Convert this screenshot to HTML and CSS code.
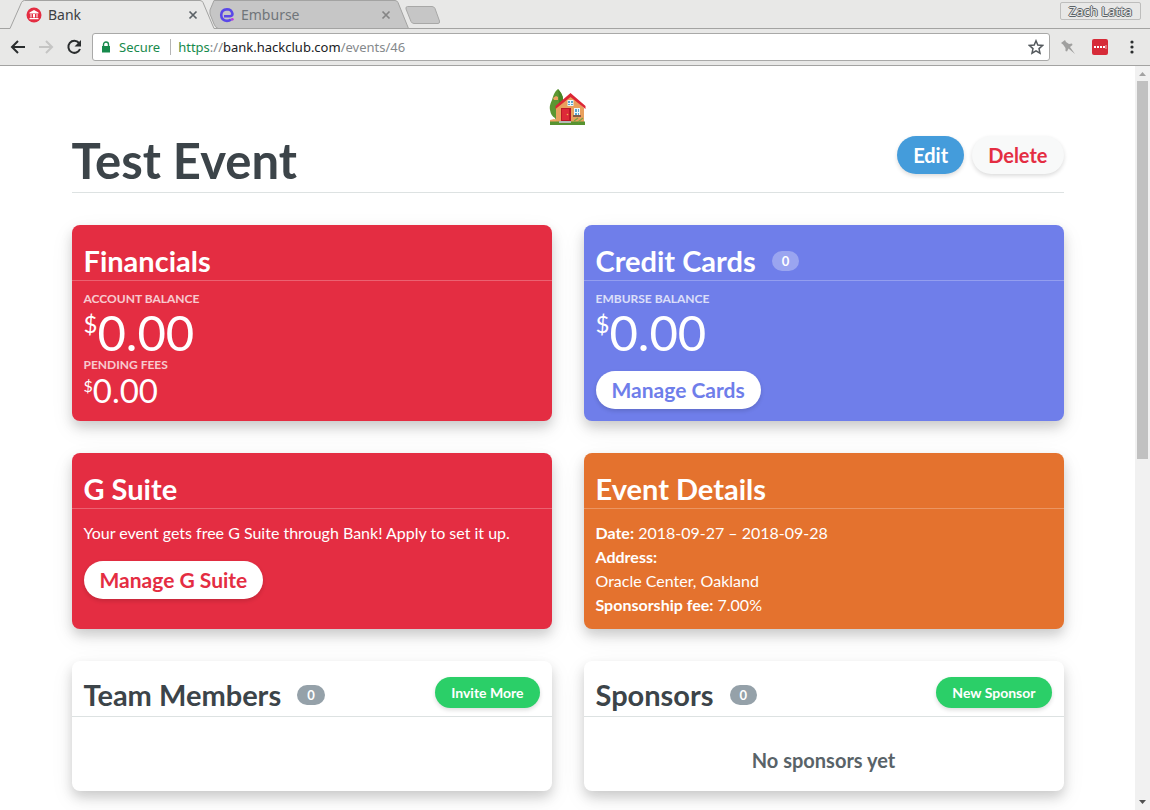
FILE: index.html
```html
<!DOCTYPE html>
<html lang="en">
<head>
<meta charset="utf-8">
<title>Bank</title>
<link rel="stylesheet" href="styles.css">
</head>
<body>
<div class="browser">
  <header class="tabstrip">
    <div class="tab tab-active">
      <svg class="tab-shape" viewBox="0 0 208 29" preserveAspectRatio="none" aria-hidden="true"><path d="M0 28.5H2L13.500 2.500Q14.500 .5 16.500 .5H192Q194 .5 195 2.500L206 28.500H208V29H0Z" fill="#e8e8e7"/><path d="M0 28.500H2L13.500 2.500Q14.500 .5 16.500 .5H192Q194 .5 195 2.500L206 28.500H208" fill="none" stroke="#a3a3a2"/></svg>
      <svg class="favicon" viewBox="0 0 16 16" aria-hidden="true"><circle cx="8" cy="8" r="7.500" fill="#e42d42"/><path d="M8 3l4.500 2.500v1h-9v-1zM4.500 7h1v3.500h-1zM7 7h2v3.500H7zM10.500 7h1v3.500h-1zM3.500 11h9v1.200h-9z" fill="#fff"/></svg>
      <span class="tab-title">Bank</span>
      <button class="tab-close" aria-label="Close Bank"><svg viewBox="0 0 10 10"><path d="M1.500 1.500l7 7M8.500 1.500l-7 7" stroke="#5b6166" stroke-width="1.700"/></svg></button>
    </div>
    <div class="tab tab-back">
      <svg class="tab-shape" viewBox="0 0 208 29" preserveAspectRatio="none" aria-hidden="true"><path d="M2 10L6 .5H187Q189 .5 190 2.500L200.500 28.500H10Q7 27 6 24L2 14Z" fill="#c6c6c6" stroke="#a3a3a2"/></svg>
      <svg class="favicon" viewBox="0 0 16 16" aria-hidden="true"><path d="M5 9.300H11Q13.800 9 13.400 6.500Q12.300 2.200 8 2.200Q2.300 2.600 2.200 8Q2.400 13.600 8 13.900Q10.500 13.900 12 12.600" fill="none" stroke="#5a48e8" stroke-width="2.600"/><circle cx="13.300" cy="12.300" r="1.400" fill="#b93ce0"/></svg>
      <span class="tab-title">Emburse</span>
      <button class="tab-close" aria-label="Close Emburse"><svg viewBox="0 0 10 10"><path d="M1.500 1.500l7 7M8.500 1.500l-7 7" stroke="#858585" stroke-width="1.700"/></svg></button>
    </div>
    <button class="new-tab" aria-label="New tab"><svg viewBox="0 0 36 19"><path d="M2.500 .5H27Q29 .5 30 2.500L34.500 15Q35 17.500 33 17.500H9Q7 17.500 6 15.500L1 3Q.5 .5 2.500 .5Z" fill="#c6c6c6" stroke="#a8a8a7"/></svg></button>
    <button class="profile">Zach Latta</button>
  </header>
  <nav class="toolbar" aria-label="Browser toolbar">
    <button class="nav-button" aria-label="Back"><svg viewBox="0 0 16 16"><path d="M15 8H2.500M8 2L2 8l6 6" fill="none" stroke="#2a2d2e" stroke-width="2"/></svg></button>
    <button class="nav-button" aria-label="Forward"><svg viewBox="0 0 16 16"><path d="M1 8h12.500M8 2l6 6-6 6" fill="none" stroke="#c5c5c4" stroke-width="2"/></svg></button>
    <button class="nav-button" aria-label="Reload"><svg viewBox="0 0 16 16"><path d="M13 4A6 6 0 1 0 14 10" fill="none" stroke="#2a2d2e" stroke-width="2"/><path d="M15 1v6.500H8.500z" fill="#2a2d2e"/></svg></button>
    <div class="address">
      <svg class="lock" viewBox="0 0 10 12" aria-hidden="true"><path d="M2.500 5V3.500a2.500 2.500 0 0 1 5 0V5" fill="none" stroke="#178a4c" stroke-width="1.400"/><path d="M1 5h8v6.500H1z" fill="#178a4c"/></svg>
      <span class="secure">Secure</span>
      <div class="url" role="textbox" aria-label="Address" contenteditable="true" spellcheck="false"><span class="scheme">https</span><span class="muted">://</span>bank.hackclub.com<span class="muted">/events/46</span></div>
      <button class="star" aria-label="Bookmark"><svg viewBox="0 0 16 16"><path d="M8 1.800l1.800 4.300 4.700.4-3.500 3.100 1 4.600L8 11.800 4 14.200l1-4.600L1.500 6.500l4.700-.4z" fill="none" stroke="#54595d" stroke-width="1.500"/></svg></button>
    </div>
    <button class="tool" aria-label="Pin"><svg viewBox="0 0 16 16"><path d="M1 4l4-3 1 2 3 2 3-.5.500 1.500-2.500 2L15 15 8.500 9.500 7 12.500l-1.500-.5V9L3 5.500z" fill="#a0a09f"/></svg></button>
    <button class="tool" aria-label="Extension"><svg viewBox="0 0 16 16"><rect width="16" height="16" rx="2" fill="#d62b38"/><path d="M2 7h2v2H2zM5 7h2v2H5zM8 7h2v2H8zM11 7h2v2h-2z" fill="#fff"/><path d="M13.500 6h1v4h-1z" fill="#f3a9ae"/></svg></button>
    <button class="tool" aria-label="Menu"><svg viewBox="0 0 16 16"><g fill="#2a2d2e"><circle cx="8" cy="3" r="1.600"/><circle cx="8" cy="8" r="1.600"/><circle cx="8" cy="13" r="1.600"/></g></svg></button>
  </nav>
  <div class="viewport">
    <main class="page">
      <div class="content">
        <a class="home" href="#" aria-label="Home"><svg viewBox="0 0 37 37">
          <path d="M9 0C5 3 4 8 3 11Q0 17 1 21Q2 27 6 29L8 35H14V8Q12 3 9 0Z" fill="#5c9631"/>
          <path d="M9 0Q13 4 14 10L14 20 9 27Q11 10 9 0Z" fill="#488526"/>
          <path d="M4 9l3-2 2 1v3H5zM1 31l4-1 3 1v3H1z" fill="#efa263"/>
          <path d="M7 19L21.500 6 35 19V34H7Z" fill="#e9a05d"/>
          <path d="M21.500 4L36.500 17V20L21.500 8 6.500 20V17Z" fill="#dc2634"/>
          <path d="M18.500 11h6v6h-6z" fill="#eef7fb"/><path d="M19 12h2v2h-2zM22 12h2v2h-2zM19 15h2v1h-2zM22 15h2v1h-2z" fill="#5ca6cf"/>
          <path d="M12 19h10v13H12z" fill="#bb1727"/><path d="M13 20h7v11h-7z" fill="#dd2938"/><circle cx="18.500" cy="25.500" r=".8" fill="#f2b44c"/>
          <path d="M25 19h6v8h-6z" fill="#eef7fb"/><path d="M26 20h2v3h-2zM29 20h1v3h-1zM26 24h2v2h-2zM29 24h1v2h-1z" fill="#5ca6cf"/>
          <path d="M24 26h8v2h-8z" fill="#855b47"/>
          <path d="M1 32.500h35V36H1z" fill="#579330"/><path d="M10 32h12v2H10z" fill="#b5bbb7"/><path d="M25 32l4-3M29 33l5-4" stroke="#7da542" stroke-width="1.300"/>
        </svg></a>
        <div class="page-head">
          <h1>Test Event</h1>
          <div class="actions">
            <a class="btn btn-info" href="#">Edit</a>
            <button class="btn btn-delete">Delete</button>
          </div>
        </div>
        <div class="cards">
          <section class="card card-red">
            <div class="card-head"><h2>Financials</h2></div>
            <dl class="stats">
              <dt>Account balance</dt>
              <dd class="amount"><span class="currency">$</span>0.00</dd>
              <dt>Pending fees</dt>
              <dd class="amount amount-small"><span class="currency">$</span>0.00</dd>
            </dl>
          </section>
          <section class="card card-indigo">
            <div class="card-head"><h2>Credit Cards</h2><span class="badge">0</span></div>
            <dl class="stats">
              <dt>Emburse balance</dt>
              <dd class="amount"><span class="currency">$</span>0.00</dd>
            </dl>
            <a class="btn btn-card" href="#">Manage Cards</a>
          </section>
          <section class="card card-red">
            <div class="card-head"><h2>G Suite</h2></div>
            <p class="copy">Your event gets free G Suite through Bank! Apply to set it up.</p>
            <a class="btn btn-card" href="#">Manage G Suite</a>
          </section>
          <section class="card card-orange">
            <div class="card-head"><h2>Event Details</h2></div>
            <p class="copy"><strong>Date:</strong> 2018-09-27 – 2018-09-28<br><strong>Address:</strong><br>Oracle Center, Oakland<br><strong>Sponsorship fee:</strong> 7.00%</p>
          </section>
          <section class="card">
            <div class="card-head card-head-action"><h2>Team Members</h2><span class="badge">0</span><a class="btn btn-small" href="#">Invite More</a></div>
          </section>
          <section class="card">
            <div class="card-head card-head-action"><h2>Sponsors</h2><span class="badge">0</span><a class="btn btn-small" href="#">New Sponsor</a></div>
            <p class="empty">No sponsors yet</p>
          </section>
        </div>
      </div>
    </main>
    <div class="scrollbar" aria-hidden="true">
      <svg viewBox="0 0 15 15"><path d="M4 10h7L7.500 6z" fill="#a3a3a3"/></svg>
      <div class="track"><div class="thumb"></div></div>
      <svg viewBox="0 0 15 15"><path d="M4 5h7L7.500 9z" fill="#505050"/></svg>
    </div>
  </div>
</div>
</body>
</html>
```
FILE: styles.css
```css
* { box-sizing: border-box; }
body, h1, h2, p, dl, dd { margin: 0; }
button { margin: 0; padding: 0; border: 0; background: none; font: inherit; color: inherit; }
a { color: inherit; text-decoration: none; }
svg { display: block; }

body {
  background: #fff;
  color: #3c4449;
  font-family: Lato, "Liberation Sans", sans-serif;
  font-size: 16px;
  line-height: 24px;
}

.browser { display: flex; flex-direction: column; height: 100vh; overflow: hidden; }

/* Tabs */
.tabstrip {
  display: flex;
  flex: none;
  height: 29px;
  padding: 0 8px;
  background: #e8e8e7;
  box-shadow: inset 0 -1px #a3a3a2;
  font: 14px/28px "Noto Sans", sans-serif;
}
.tab {
  position: relative;
  display: flex;
  align-items: center;
  width: 208px;
  padding: 0 18px;
}
.tab-active { z-index: 1; color: #3c4043; }
.tab-back { margin-left: -8px; padding: 0 18px 0 11px; color: #70757a; }
.tab-back .tab-close { margin-right: 7px; }
.tab-shape { position: absolute; inset: 0; width: 100%; height: 100%; }
.favicon, .tab-title, .tab-close { position: relative; }
.favicon { width: 16px; height: 16px; }
.tab-title { flex: 1; margin-left: 6px; }
.tab-close svg { width: 10px; height: 10px; }
.new-tab { align-self: center; margin: 2px 0 0 -11px; }
.new-tab svg { width: 36px; height: 19px; }
.profile {
  height: 18px;
  margin: 2px 1px 0 auto;
  padding: 0 8px;
  border: 1px solid #bdbdbc;
  border-radius: 2px;
  color: #e8e8e7;
  font-size: 13px;
  line-height: 16px;
  text-shadow: 1px 0 #5d6468, -1px 0 #5d6468, 0 1px #5d6468, 0 -1px #5d6468;
}

/* Toolbar */
.toolbar {
  display: flex;
  flex: none;
  align-items: center;
  gap: 12px;
  height: 37px;
  padding: 0 10px;
  border-bottom: 1px solid #a3a3a2;
  background: #e8e8e7;
  font: 13px/24px "Noto Sans", sans-serif;
}
.nav-button svg, .star svg { width: 16px; height: 16px; }
.tool svg { width: 16px; height: 16px; }
.tool { margin: 0 0 0 4px; }
.address {
  display: flex;
  flex: 1;
  align-items: center;
  height: 28px;
  margin-right: -6px;
  margin-left: -2px;
  padding: 0 5px 0 8px;
  border: 1px solid #a9a9a8;
  border-radius: 3px;
  background: #fff;
}
.lock { width: 10px; height: 12px; }
.secure { margin: 0 10px 0 8px; color: #178a4c; }
.url {
  flex: 1;
  padding-left: 7px;
  border-left: 1px solid #b5b5b5;
  color: #202124;
  line-height: 16px;
  outline: 0;
}
.scheme { color: #178a4c; }
.muted { color: #85898c; }

/* Page */
.viewport { display: flex; flex: 1; min-height: 0; }
.page { flex: 1; min-width: 0; overflow: hidden; padding: 0 32px; }
.content { max-width: 992px; margin: 0 auto; padding-top: 23px; }
.home { display: block; width: 37px; margin: 0 auto; }
.home svg { width: 37px; height: 37px; }
.page-head {
  display: flex;
  align-items: center;
  justify-content: space-between;
  padding-top: 2px;
  border-bottom: 1px solid #dde2e2;
}
h1 { font-size: 49px; line-height: 64px; }
.actions { display: flex; gap: 8px; margin-bottom: 10px; }

.btn {
  display: inline-block;
  padding: 7px 16px;
  border-radius: 19px;
  box-shadow: 0 2px 4px rgba(0, 0, 0, .14);
  font-size: 21px;
  font-weight: 700;
  line-height: 24px;
}
.actions .btn { font-size: 20px; }
.btn-info { background: #449cdb; color: #fff; }
.btn-delete { background: #f8f9f9; color: #e42d42; }
.btn-card { margin-left: 12px; background: #fff; color: #e42d42; }
.card-indigo .btn-card { margin-top: 15px; color: #6f7eea; }
.btn-small {
  margin: 0 0 0 auto;
  padding: 4px 16px 3px;
  background: #2bcf68;
  color: #fff;
  font-size: 14px;
}

/* Cards */
.cards {
  display: grid;
  grid-template-columns: repeat(auto-fit, minmax(400px, 1fr));
  gap: 32px;
  padding: 32px 0;
}
.card {
  min-height: 130px;
  padding-bottom: 12px;
  border-radius: 8px;
  background: #fff;
  box-shadow: 0 6px 12px rgba(0, 0, 0, .16), 0 8px 24px rgba(0, 0, 0, .07);
}
.card-red, .card-indigo, .card-orange { color: #fff; }
.card-red { background: #e42d42; }
.card-indigo { background: #6f7eea; }
.card-orange { background: #e4722e; }
.card-head {
  display: flex;
  align-items: center;
  height: 56px;
  padding: 16px 12px 0;
  border-bottom: 1px solid #dde2e2;
}
.card-red .card-head, .card-indigo .card-head, .card-orange .card-head { border-color: rgba(255, 255, 255, .25); }
.card-head-action { padding-bottom: 4px; }
.card-head .btn { margin-bottom: 4px; }
h2 { font-size: 29px; line-height: 32px; }
.badge {
  margin-left: 16px;
  padding: 0 10px;
  border-radius: 10px;
  background: #95a1a9;
  color: #fff;
  font-size: 13px;
  font-weight: 700;
  line-height: 20px;
}
.card-indigo .badge { background: rgba(255, 255, 255, .3); }

.stats { padding: 9px 12px 0; }
dt { font-size: 12px; font-weight: 700; line-height: 18px; text-transform: uppercase; opacity: .75; }
.amount { display: flex; align-items: flex-start; font-size: 49px; line-height: 48px; }
.currency { font-size: 24px; line-height: 32px; }
.amount-small { font-size: 33px; line-height: 32px; }
.amount-small .currency { font-size: 16px; line-height: 24px; }

.copy { padding: 12px 12px 0; }
.card-red .copy { padding-bottom: 16px; }
.empty { padding: 31px 12px 7px; color: #596368; font-size: 20px; font-weight: 700; text-align: center; }

/* Scrollbar */
.scrollbar { display: flex; flex-direction: column; flex: none; width: 15px; background: #f1f1f1; }
.scrollbar svg { width: 15px; height: 15px; }
.track { flex: 1; padding: 0 2px; }
.thumb { height: 53%; background: #c1c1c1; }
```
